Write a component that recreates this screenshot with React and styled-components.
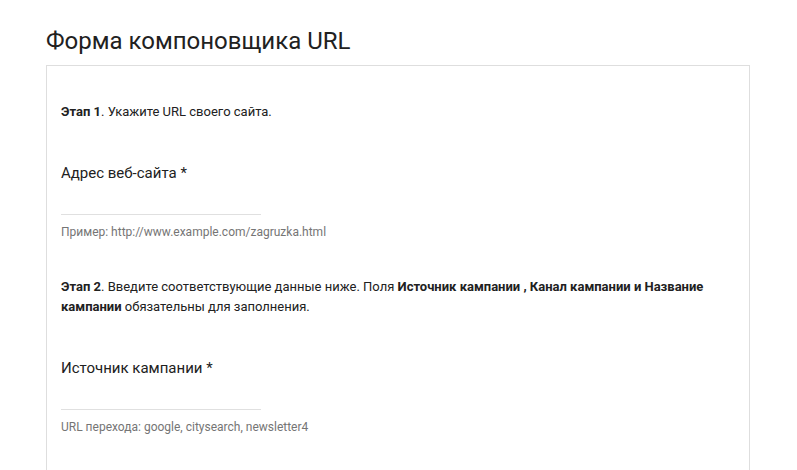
import React from 'react';
import styled, { createGlobalStyle } from 'styled-components';

const Global = createGlobalStyle`
	body {
		margin: 0;
		background: #fff;
		font-family: Roboto, "Noto Sans", sans-serif;
		color: #212121;
	}
`;

const Page = styled.div`
	padding: 27px 47px 0 46px;
`;

const Title = styled.h1`
	margin: 0 0 10px;
	font-size: 24px;
	line-height: 28px;
	font-weight: 400;
	color: #212121;
`;

const Card = styled.div`
	border: 1px solid #dedede;
	border-bottom: none;
	padding: 36px 14px 0;
	height: 405px;
	box-sizing: border-box;
`;

const Step = styled.p`
	margin: 0 0 ${p => p.gap}px;
	font-size: 13px;
	line-height: 20px;
	color: #212121;

	b {
		font-weight: 700;
	}
`;

const Field = styled.div`
	margin-bottom: 37px;
`;

const Label = styled.label`
	display: block;
	font-size: 15px;
	line-height: 20px;
	color: #212121;
`;

const Input = styled.input`
	display: block;
	width: 200px;
	height: 31px;
	margin: 0;
	padding: 0;
	border: none;
	border-bottom: 1px solid #e0e0e0;
	outline: none;
	font-family: inherit;
	font-size: 14px;
	background: transparent;
`;

const Hint = styled.div`
	margin-top: 9px;
	font-size: 12px;
	line-height: 16px;
	color: #757575;
`;

const fields = [
	{ label: 'Адрес веб-сайта *', hint: 'Пример: http://www.example.com/zagruzka.html' },
	{ label: 'Источник кампании *', hint: 'URL перехода: google, citysearch, newsletter4' },
];

const App = () => {
	return (
		<Page>
			<Global />
			<Title>Форма компоновщика URL</Title>
			<Card>
				<Step gap={41}><b>Этап 1</b>. Укажите URL своего сайта.</Step>
				<Field>
					<Label>{fields[0].label}</Label>
					<Input type="text" />
					<Hint>{fields[0].hint}</Hint>
				</Field>
				<Step gap={41}>
					<b>Этап 2</b>. Введите соответствующие данные ниже. Поля <b>Источник кампании , Канал кампании и Название кампании</b> обязательны для заполнения.
				</Step>
				<Field>
					<Label>{fields[1].label}</Label>
					<Input type="text" />
					<Hint>{fields[1].hint}</Hint>
				</Field>
			</Card>
		</Page>
	);
};

export default App;
